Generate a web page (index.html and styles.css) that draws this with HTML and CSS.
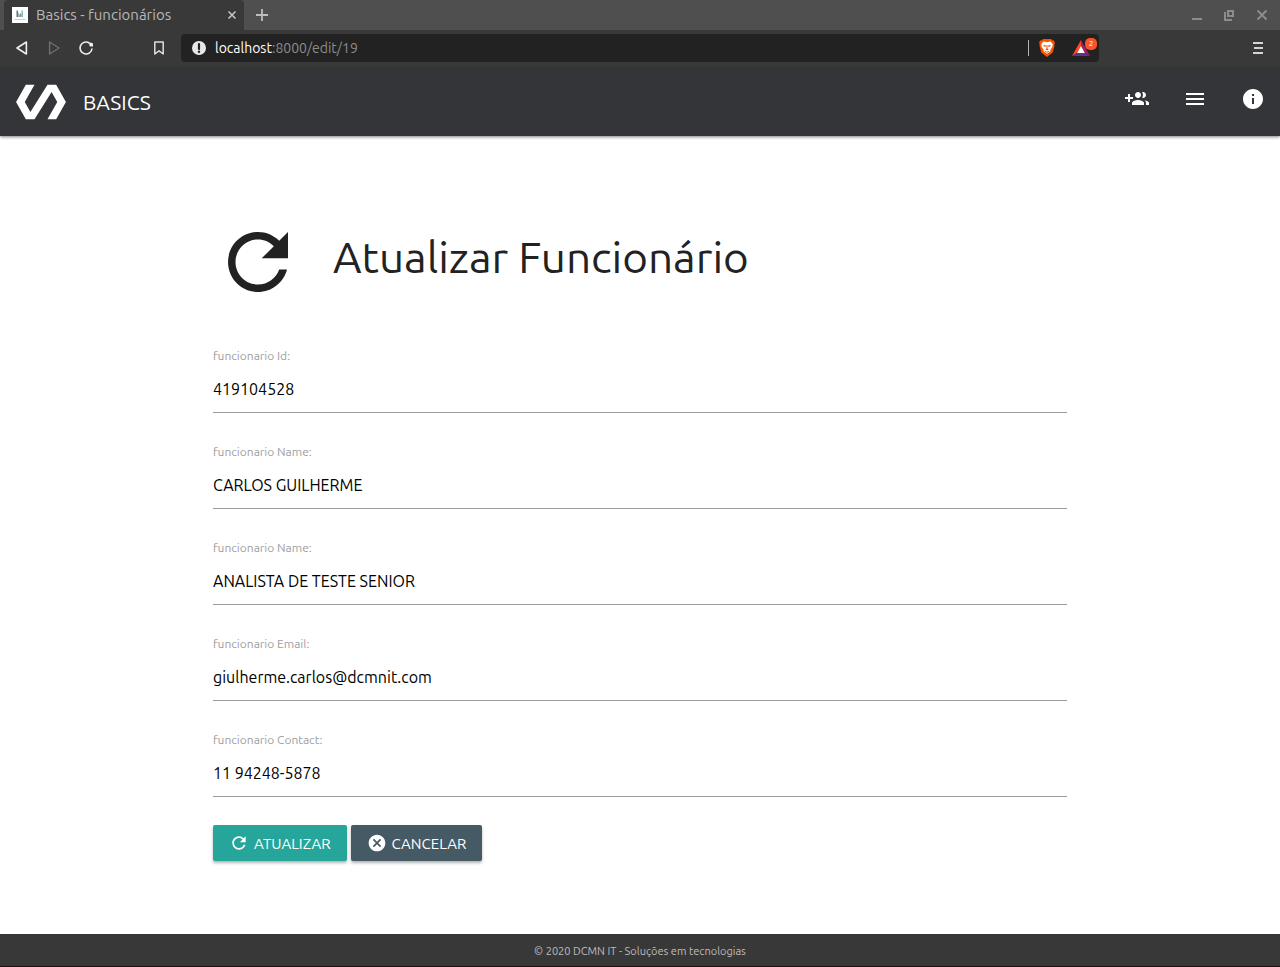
FILE: index.html
```html
<!DOCTYPE html>
<html lang="pt-BR">
<head>
<meta charset="utf-8">
<meta name="viewport" content="width=device-width, initial-scale=1">
<title>Basics - funcionários</title>
<link rel="stylesheet" href="styles.css">
</head>
<body>
<div class="tabbar">
  <div class="tab">
    <svg class="favicon" viewBox="0 0 16 16" aria-hidden="true"><path fill="#fff" d="M0 0h16v16H0z"/><path fill="#69737b" d="M4.500 3.500H6V10H4.500z"/><path fill="#a9b2b7" d="M6 5l2 3v2H6z"/><path fill="#c9cfd2" d="M2.500 12h11v1h-11z"/><path fill="#7cc0c9" d="M9.500 3.500H11V10H9.500z"/><path fill="#84939a" d="M8 6.500h1.500V10H8z"/></svg>
    <span class="tab-title">Basics - funcionários</span>
    <button class="icon-button" type="button" aria-label="Fechar aba"><svg width="10" height="10" viewBox="0 0 10 10"><path d="M1.500 1.500l7 7m0-7l-7 7" stroke="#c4c4c4" stroke-width="1.600"/></svg></button>
  </div>
  <button class="icon-button new-tab" type="button" aria-label="Nova aba"><svg width="12" height="12" viewBox="0 0 12 12"><path d="M6 0v12M0 6h12" stroke="#bdbdbd" stroke-width="1.800"/></svg></button>
  <div class="window-controls">
    <button class="icon-button" type="button" aria-label="Minimizar"><svg width="12" height="12" viewBox="0 0 12 12"><path d="M2 10h10" stroke="#8c8c8c" stroke-width="2"/></svg></button>
    <button class="icon-button" type="button" aria-label="Restaurar"><svg width="12" height="12" viewBox="0 0 12 12"><path d="M5 2h5v5H5zM2 3v8h7" fill="none" stroke="#8c8c8c" stroke-width="2"/></svg></button>
    <button class="icon-button" type="button" aria-label="Fechar"><svg width="12" height="12" viewBox="0 0 12 12"><path d="M1.500 1.500l9 9m0-9l-9 9" stroke="#8c8c8c" stroke-width="2"/></svg></button>
  </div>
</div>
<div class="toolbar">
  <div class="history">
    <button class="icon-button" type="button" aria-label="Voltar"><svg width="16" height="16" viewBox="0 0 16 16"><path d="M12.400 2v12L3 8z" fill="none" stroke="#eee" stroke-width="1.600" stroke-linejoin="round"/></svg></button>
    <button class="icon-button" type="button" aria-label="Avançar"><svg width="16" height="16" viewBox="0 0 16 16"><path d="M3.600 2v12L13 8z" fill="none" stroke="#707070" stroke-width="1.400" stroke-linejoin="round"/></svg></button>
    <button class="icon-button" type="button" aria-label="Recarregar"><svg width="16" height="16" viewBox="0 0 16 16"><path d="M14 8.500A6 6 0 1 1 11.300 3" fill="none" stroke="#eee" stroke-width="1.600"/><path d="M11 2.500q3 0 4 1v3h-3q-1-1-1-4z" fill="#eee"/></svg></button>
  </div>
  <button class="icon-button bookmark" type="button" aria-label="Favoritar"><svg width="16" height="16" viewBox="0 0 16 16"><path d="M3.800 2h8.400v12L8 10.800 3.800 14z" fill="none" stroke="#ddd" stroke-width="1.500" stroke-linejoin="round"/></svg></button>
  <div class="address">
    <svg width="14" height="14" viewBox="0 0 14 14" aria-hidden="true"><circle cx="7" cy="7" r="7" fill="#e8e8e8"/><path d="M7 3v5" stroke="#222" stroke-width="2.200" stroke-linecap="round"/><circle cx="7" cy="10.800" r="1.200" fill="#222"/></svg>
    <span class="url"><span class="host">localhost</span>:8000/edit/19</span>
    <span class="divider"></span>
    <svg width="16" height="18" viewBox="0 0 16 18" aria-hidden="true"><path fill="#fb5200" d="M4 0h8l1.500 1.500L15 1.600l1 2.400-.7 1.500.2 1.500-1.800 6.500L8 18l-5.700-4.500L.5 7l.2-1.500L0 4l1-2.400 1.500-.1z"/><path fill="#fff" d="M4.500 2.600L8 3.200l3.500-.6L13.800 5l-.5 3-2 2.800.2 1.400L8 14.800l-3.500-2.600.2-1.400-2-2.800-.5-3z"/><path fill="#fb5200" d="M4.500 6l2.500.5-.5 1.400-2-.7zm7 0L9 6.500l.5 1.400 2-.7zM7.500 6h1v3.500l1.200.8L8 11.500l-1.700-1.200 1.200-.8zM5.600 11.800l2.400 1 2.400-1-.4 1-2 1-2-1z"/></svg>
    <span class="rewards">
      <svg width="18" height="16" viewBox="0 0 18 16" aria-hidden="true"><path fill="#ff4724" d="M9 0L0 16l9-5.500z"/><path fill="#9e1f63" d="M9 0l9 16-9-5.500z"/><path fill="#662d91" d="M0 16h18l-9-5.500z"/><path fill="#fff" d="M9 6l3.800 7H5.200z"/></svg>
      <span class="badge">2</span>
    </span>
  </div>
  <button class="icon-button" type="button" aria-label="Menu do navegador"><svg width="12" height="12" viewBox="0 0 12 12"><path d="M1 1h10M2 6h9M1 11h10" stroke="#d5d5d5" stroke-width="2"/></svg></button>
</div>
<header class="navbar">
  <a class="brand" href="#"><svg width="52" height="52" viewBox="0 0 24 24" fill="currentColor" aria-hidden="true"><path d="M19 4h-4L7.110 16.630 4.500 12 9 4H5L.5 12 5 20h4l7.890-12.630L19.500 12 15 20h4l4.500-8z"/></svg><span>BASICS</span></a>
  <nav class="nav-links">
    <a href="#" aria-label="Adicionar funcionário"><svg width="24" height="24" viewBox="0 0 24 24" fill="currentColor"><path d="M8 10H5V7H3v3H0v2h3v3h2v-3h3v-2zm10 1c1.660 0 2.990-1.340 2.990-3S19.660 5 18 5c-.32 0-.63.05-.91.14.57.81.9 1.790.9 2.860s-.34 2.040-.9 2.860c.28.09.59.14.91.14zm-5 0c1.660 0 2.990-1.340 2.990-3S14.660 5 13 5c-1.660 0-3 1.340-3 3s1.340 3 3 3zm6.620 2.160c.83.73 1.380 1.660 1.380 2.840v2h3v-2c0-1.540-2.370-2.490-4.380-2.840zM13 13c-2 0-6 1-6 3v2h12v-2c0-2-4-3-6-3z"/></svg></a>
    <a href="#" aria-label="Listar funcionários"><svg width="24" height="24" viewBox="0 0 24 24" fill="currentColor"><path d="M3 18h18v-2H3v2zm0-5h18v-2H3v2zm0-7v2h18V6H3z"/></svg></a>
    <a href="#" aria-label="Sobre"><svg width="24" height="24" viewBox="0 0 24 24" fill="currentColor"><path d="M12 2C6.480 2 2 6.480 2 12s4.480 10 10 10 10-4.480 10-10S17.520 2 12 2zm1 15h-2v-6h2v6zm0-8h-2V7h2v2z"/></svg></a>
  </nav>
</header>
<main class="content">
  <h1 class="heading"><svg width="90" height="90" viewBox="0 0 24 24" fill="currentColor" aria-hidden="true"><path d="M17.650 6.350C16.200 4.900 14.210 4 12 4c-4.420 0-7.990 3.580-7.990 8s3.570 8 7.990 8c3.730 0 6.840-2.550 7.730-6h-2.080c-.82 2.330-3.040 4-5.650 4-3.310 0-6-2.690-6-6s2.690-6 6-6c1.660 0 3.140.69 4.220 1.780L13 11h7V4l-2.350 2.350z"/></svg><span class="heading-text">Atualizar Funcionário</span></h1>
  <form class="form">
    <div class="field"><label for="fid">funcionario Id:</label><input id="fid" type="text" value="419104528"></div>
    <div class="field"><label for="fname">funcionario Name:</label><input id="fname" type="text" value="CARLOS GUILHERME"></div>
    <div class="field"><label for="frole">funcionario Name:</label><input id="frole" type="text" value="ANALISTA DE TESTE SENIOR"></div>
    <div class="field"><label for="fmail">funcionario Email:</label><input id="fmail" type="text" value="giulherme.carlos@dcmnit.com"></div>
    <div class="field"><label for="fcontact">funcionario Contact:</label><input id="fcontact" type="text" value="11 94248-5878"></div>
    <div class="actions">
      <button class="btn btn-update" type="submit"><svg width="20" height="20" viewBox="0 0 24 24" fill="currentColor" aria-hidden="true"><path d="M17.650 6.350C16.200 4.900 14.210 4 12 4c-4.420 0-7.990 3.580-7.990 8s3.570 8 7.990 8c3.730 0 6.840-2.550 7.730-6h-2.080c-.82 2.330-3.040 4-5.650 4-3.310 0-6-2.690-6-6s2.690-6 6-6c1.660 0 3.140.69 4.220 1.780L13 11h7V4l-2.350 2.350z"/></svg>ATUALIZAR</button>
      <button class="btn btn-cancel" type="button"><svg width="20" height="20" viewBox="0 0 24 24" fill="currentColor" aria-hidden="true"><path d="M12 2C6.470 2 2 6.470 2 12s4.470 10 10 10 10-4.470 10-10S17.530 2 12 2zm5 13.590L15.590 17 12 13.410 8.410 17 7 15.590 10.590 12 7 8.410 8.410 7 12 10.590 15.590 7 17 8.410 13.410 12 17 15.590z"/></svg>CANCELAR</button>
    </div>
  </form>
</main>
<footer class="footer">© 2020 DCMN IT - Soluções em tecnologias</footer>
</body>
</html>
```
FILE: styles.css
```css
* { box-sizing: border-box; }
body {
  margin: 0;
  min-height: 100vh;
  display: flex;
  flex-direction: column;
  background: #fff;
  color: #222;
  font-family: Ubuntu, "Noto Sans", sans-serif;
}
svg { display: block; flex: none; }
button { font-family: inherit; cursor: pointer; }
.icon-button { padding: 0; border: 0; background: none; }

.tabbar {
  display: flex;
  align-items: center;
  height: 30px;
  padding: 0 12px 0 4px;
  background: #4f4f4f;
}
.tab {
  display: flex;
  align-items: center;
  width: 240px;
  height: 30px;
  padding: 0 7px 0 8px;
  border-radius: 4px 4px 0 0;
  background: #393939;
}
.favicon { width: 16px; height: 16px; }
.tab-title { flex: 1; margin-left: 8px; padding-bottom: 2px; font-size: 15px; color: #b8b8b8; white-space: nowrap; }
.new-tab { margin-left: 12px; }
.window-controls { display: flex; gap: 21px; margin-left: auto; }

.toolbar {
  display: flex;
  align-items: center;
  height: 38px;
  padding: 0 16px 2px 14px;
  background: #393939;
}
.history { display: flex; gap: 16px; }
.bookmark { margin-left: 57px; }
.address {
  flex: 1;
  display: flex;
  align-items: center;
  height: 28px;
  margin: 0 153px 0 14px;
  padding: 0 9px 0 11px;
  border-radius: 4px;
  background: #222;
}
.url { flex: 1; margin-left: 9px; font-size: 14px; color: #8c8c8c; }
.host { color: #fff; }
.divider { width: 1px; height: 16px; margin-right: 10px; background: #b5b5b5; }
.rewards { position: relative; margin-left: 17px; }
.badge {
  position: absolute;
  top: -2px;
  right: -7px;
  width: 12px;
  height: 12px;
  border-radius: 5px;
  background: #fb542b;
  color: #fff;
  font-size: 8px;
  line-height: 12px;
  text-align: center;
}

.navbar {
  display: flex;
  align-items: center;
  justify-content: space-between;
  height: 68px;
  padding: 0 15px;
  background: #343539;
  color: #fff;
  box-shadow: 0 1px 3px rgba(0, 0, 0, 0.5);
}
.navbar a { color: inherit; text-decoration: none; }
.brand { display: flex; align-items: center; gap: 16px; font-size: 21px; }
.nav-links { display: flex; gap: 34px; padding-bottom: 6px; }

.content { flex: 1; width: 70%; margin: 0 auto; padding: 81px 21px 73px; }
.heading {
  display: flex;
  align-items: center;
  gap: 30px;
  margin: 0 0 41px;
  font-size: 44px;
  font-weight: 400;
  line-height: 50px;
}
.heading-text { padding-bottom: 10px; }
.field { display: flex; flex-direction: column; margin-bottom: 31px; }
.field:nth-last-of-type(2) { margin-bottom: 28px; }
.field label { padding-bottom: 1px; font-size: 12px; line-height: 16px; color: #9e9e9e; }
.field input {
  width: 100%;
  height: 48px;
  padding: 0;
  border: 0;
  border-bottom: 1px solid #9e9e9e;
  outline: 0;
  background: transparent;
  color: #000;
  font: inherit;
  font-size: 16px;
}
.actions { display: flex; gap: 4px; }
.btn {
  display: flex;
  align-items: center;
  gap: 5px;
  height: 36px;
  padding: 0 16px;
  border: 0;
  border-radius: 2px;
  color: #fff;
  font-size: 15px;
  box-shadow: 0 2px 3px rgba(0, 0, 0, 0.3);
}
.btn-update { background: #26a69a; }
.btn-cancel { background: #455a64; }

.footer {
  padding-top: 2px;
  border-bottom: 1px solid #20130f;
  background: #383838;
  color: #bdbdbd;
  font-size: 11px;
  line-height: 30px;
  text-align: center;
}
```
